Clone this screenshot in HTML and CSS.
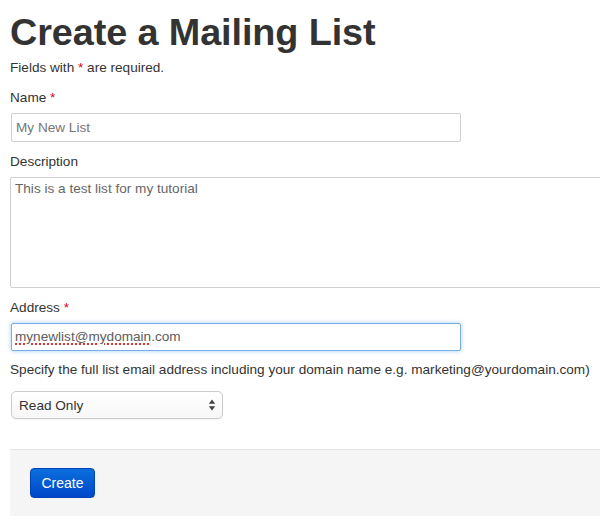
FILE: index.html
```html
<!DOCTYPE html>
<html lang="en">
<head>
<meta charset="utf-8">
<title>Create a Mailing List</title>
<link rel="stylesheet" href="styles.css">
</head>
<body>
<div class="page">
  <h1 class="title">Create a Mailing List</h1>
  <p class="note">Fields with <span class="req">*</span> are required.</p>
  <form class="form">
    <div class="group">
      <label class="label" for="name">Name <span class="req">*</span></label>
      <input class="input text-input" id="name" type="text" value="My New List">
    </div>
    <div class="group">
      <label class="label" for="desc">Description</label>
      <textarea class="input textarea" id="desc">This is a test list for my tutorial</textarea>
    </div>
    <div class="group">
      <label class="label">Address <span class="req">*</span></label>
      <div class="input text-input focus" role="textbox"><span class="misspelled">mynewlist@mydomain</span>.com</div>
    </div>
    <p class="help">Specify the full list email address including your domain name e.g. marketing@yourdomain.com)</p>
    <div class="select-wrap">
      <select class="select">
        <option>Read Only</option>
      </select>
      <svg class="select-arrows" width="8" height="12" viewBox="0 0 8 12" aria-hidden="true">
        <path d="M4 0.5 L7.2 4.8 L0.8 4.8 Z" fill="#444"/>
        <path d="M4 11.5 L7.2 7.2 L0.8 7.2 Z" fill="#444"/>
      </svg>
    </div>
    <div class="actions">
      <button class="btn" type="button">Create</button>
    </div>
  </form>
</div>
</body>
</html>
```

FILE: styles.css
```css
html, body {
  margin: 0;
  padding: 0;
  background: #fff;
  overflow: hidden;
}

body {
  font-family: "Liberation Sans", Arial, Helvetica, sans-serif;
  color: #333;
  font-size: 13.6px;
  line-height: 20px;
}

.page {
  width: 590px;
  padding-left: 10px;
  overflow: hidden;
}

.title {
  margin: 11px 0 0;
  font-size: 37.8px;
  line-height: 42px;
  font-weight: bold;
  color: #333;
  letter-spacing: -0.1px;
}

.note {
  margin: 5px 0 0;
}

.req {
  color: #d0021b;
}

.form {
  margin: 10px 0 0;
}

.group {
  display: flex;
  flex-direction: column;
  align-items: flex-start;
  margin-bottom: 10px;
}

.label {
  display: block;
  line-height: 20px;
  margin-bottom: 5px;
  color: #333;
}

.input {
  box-sizing: border-box;
  font-family: "Liberation Sans", Arial, Helvetica, sans-serif;
  font-size: 13.6px;
  border: 1px solid #cfcfcf;
  border-radius: 2px;
  background: #fff;
  margin: 0;
  outline: none;
}

.text-input {
  width: 450px;
  height: 29px;
  padding: 0 4px;
  margin-left: 1px;
  color: #777;
  line-height: 27px;
}

div.text-input {
  height: 28px;
  line-height: 26px;
  padding: 0 3px;
  color: #5c5c5c;
}

.focus {
  border-color: #7aaee6;
  box-shadow: 0 0 4px rgba(82, 160, 236, 0.55);
}

.misspelled {
  text-decoration: underline dotted #e0352b;
  text-decoration-thickness: 2px;
  text-underline-offset: 2px;
}

.textarea {
  width: 600px;
  height: 111px;
  padding: 3px 4px;
  line-height: 16px;
  color: #666;
  resize: none;
  display: block;
}

.help {
  margin: -1px 0 0;
  line-height: 20px;
}

.select-wrap {
  position: relative;
  display: inline-flex;
  margin: 11px 0 0 1px;
}

.select {
  appearance: none;
  -webkit-appearance: none;
  box-sizing: border-box;
  width: 212px;
  height: 28px;
  padding: 0 20px 0 7px;
  border: 1px solid #cbcbcb;
  border-radius: 5px;
  background: linear-gradient(#ffffff, #f7f7f7);
  font-family: "Liberation Sans", Arial, Helvetica, sans-serif;
  font-size: 13.6px;
  color: #333;
  box-shadow: 0 1px 1px rgba(0, 0, 0, 0.04);
}

.select-arrows {
  position: absolute;
  right: 7px;
  top: 8px;
  pointer-events: none;
}

.actions {
  margin-top: 30px;
  box-sizing: border-box;
  width: 600px;
  height: 67px;
  padding: 18px 0 0 20px;
  background: #f5f5f5;
  border-top: 1px solid #e3e3e3;
}

.btn {
  box-sizing: border-box;
  width: 65px;
  height: 30px;
  padding: 0;
  border: 1px solid #0043b8;
  border-radius: 4px;
  background: linear-gradient(#0b6fdd, #0046c9);
  color: #fff;
  font-family: "Liberation Sans", Arial, Helvetica, sans-serif;
  font-size: 14px;
  line-height: 28px;
  cursor: pointer;
}
```
